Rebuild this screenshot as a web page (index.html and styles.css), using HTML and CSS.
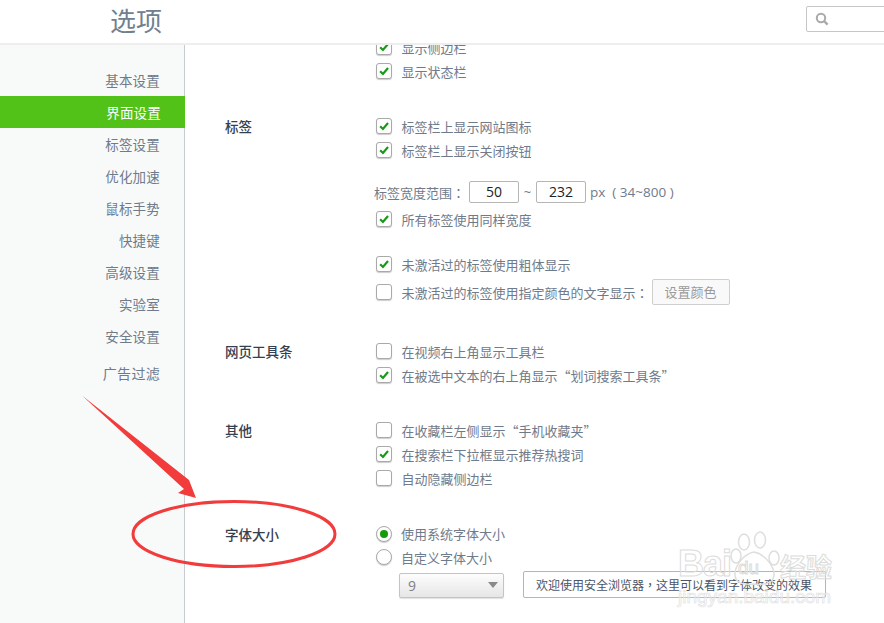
FILE: index.html
```html
<!DOCTYPE html>
<html lang="zh-CN">
<head>
<meta charset="utf-8">
<title>选项</title>
<link rel="stylesheet" href="styles.css">
</head>
<body>
<svg class="defs" width="0" height="0">
  <symbol id="tick" viewBox="0 0 16 16"><path d="M3.6 8.2 6.8 11.4 12.6 4.6" fill="none" stroke="#169a16" stroke-width="2.5"/></symbol>
</svg>
<div class="app">
  <header class="top">
    <h1 class="title">选项</h1>
    <div class="search">
      <svg class="search-icon" width="14" height="14" viewBox="0 0 14 14"><circle cx="6" cy="6" r="4.2" fill="none" stroke="#a9a9a9" stroke-width="2"/><path d="M9 9l3.6 3.6" stroke="#a9a9a9" stroke-width="2.4"/></svg>
    </div>
  </header>
  <div class="body">
    <nav class="side">
      <a class="nav-item">基本设置</a>
      <a class="nav-item active">界面设置</a>
      <a class="nav-item">标签设置</a>
      <a class="nav-item">优化加速</a>
      <a class="nav-item">鼠标手势</a>
      <a class="nav-item">快捷键</a>
      <a class="nav-item">高级设置</a>
      <a class="nav-item">实验室</a>
      <a class="nav-item">安全设置</a>
      <a class="nav-item ad">广告过滤</a>
    </nav>
    <main class="main">
      <section class="sec first">
        <div class="sec-label"></div>
        <div class="sec-body">
          <div class="row"><span class="cb"><svg viewBox="0 0 16 16"><use href="#tick"/></svg></span>显示侧边栏</div>
          <div class="row"><span class="cb"><svg viewBox="0 0 16 16"><use href="#tick"/></svg></span>显示状态栏</div>
        </div>
      </section>
      <section class="sec">
        <div class="sec-label">标签</div>
        <div class="sec-body">
          <div class="row"><span class="cb"><svg viewBox="0 0 16 16"><use href="#tick"/></svg></span>标签栏上显示网站图标</div>
          <div class="row"><span class="cb"><svg viewBox="0 0 16 16"><use href="#tick"/></svg></span>标签栏上显示关闭按钮</div>
          <div class="range">
            <span class="range-label">标签宽度范围<span class="pc" lang="zh-TW">：</span></span>
            <span class="num">50</span>
            <span class="tilde">~</span>
            <span class="num">232</span>
            <span class="unit">px&nbsp; ( 34~800 )</span>
          </div>
          <div class="row"><span class="cb"><svg viewBox="0 0 16 16"><use href="#tick"/></svg></span>所有标签使用同样宽度</div>
          <div class="row spaced"><span class="cb"><svg viewBox="0 0 16 16"><use href="#tick"/></svg></span>未激活过的标签使用粗体显示</div>
          <div class="row tall"><span class="cb"></span><span>未激活过的标签使用指定颜色的文字显示<span class="pc" lang="zh-TW">：</span></span><span class="btn">设置颜色</span></div>
        </div>
      </section>
      <section class="sec wide-gap">
        <div class="sec-label">网页工具条</div>
        <div class="sec-body">
          <div class="row"><span class="cb"></span>在视频右上角显示工具栏</div>
          <div class="row"><span class="cb"><svg viewBox="0 0 16 16"><use href="#tick"/></svg></span>在被选中文本的右上角显示“划词搜索工具条”</div>
        </div>
      </section>
      <section class="sec">
        <div class="sec-label">其他</div>
        <div class="sec-body">
          <div class="row"><span class="cb"></span>在收藏栏左侧显示“手机收藏夹”</div>
          <div class="row"><span class="cb"><svg viewBox="0 0 16 16"><use href="#tick"/></svg></span>在搜索栏下拉框显示推荐热搜词</div>
          <div class="row"><span class="cb"></span>自动隐藏侧边栏</div>
        </div>
      </section>
      <section class="sec wide-gap">
        <div class="sec-label">字体大小</div>
        <div class="sec-body">
          <div class="row short"><span class="radio on"></span>使用系统字体大小</div>
          <div class="row"><span class="radio"></span>自定义字体大小</div>
          <div class="font-row">
            <span class="select">9<i class="caret"></i></span>
            <span class="preview">欢迎使用安全浏览器<span class="pc" lang="zh-TW">，</span>这里可以看到字体改变的效果</span>
          </div>
        </div>
      </section>
    </main>
  </div>

  <svg class="mark" width="884" height="623" viewBox="0 0 884 623">
    <polygon points="82,395.500 189,480 196,498 178,493 184,489" fill="#f23b3b"/>
    <ellipse cx="234" cy="534" rx="101" ry="32.5" fill="none" stroke="#f23b3b" stroke-width="3"/>
  </svg>

  <div class="wm">
    <svg class="wm-paw" width="64" height="56" viewBox="0 0 64 56">
      <g fill="none" stroke="#dedede" stroke-width="1.5">
        <ellipse cx="14" cy="11" rx="5.5" ry="8"/>
        <ellipse cx="30" cy="9" rx="5.5" ry="8"/>
        <ellipse cx="6" cy="25" rx="5" ry="7"/>
        <ellipse cx="44" cy="27" rx="5" ry="7"/>
        <path d="M24 21C13 23 4 36 5 45c1 8 9 9 19 8 10 1 19 0 20-8 1-9-9-22-20-24z"/>
      </g>
    </svg>
    <span class="wm-bai">Bai</span><span class="wm-du">du</span><span class="wm-cn">经验</span>
    <span class="wm-url">jingyan.baidu.com</span>
  </div>
</div>
</body>
</html>
```
FILE: styles.css
```css
* { box-sizing: border-box; }
html, body { margin: 0; height: 100%; background: #fff; overflow: hidden; }
body {
  font-family: "Noto Sans CJK SC", "Liberation Sans", sans-serif;
  font-size: 13px;
  color: #6f7b8b;
}
.defs { display: block; height: 0; }
.pc { font-family: "Noto Sans CJK TC", sans-serif; }
.app { position: relative; width: 884px; height: 623px; overflow: hidden; display: flex; flex-direction: column; }

.top {
  height: 45px;
  flex: none;
  display: flex;
  align-items: flex-start;
  justify-content: space-between;
  border-bottom: 2px solid #eeeeee;
  padding-left: 110px;
}
.title { margin: 1px 0 0; font-size: 26px; line-height: 38px; font-weight: 400; color: #708090; }
.search {
  width: 91px;
  height: 26px;
  margin: 6px -13px 0 0;
  border: 1px solid #c6c6c6;
  border-radius: 2px;
  padding: 5px 0 0 8px;
}
.search-icon { display: block; }

.body { flex: 1; display: flex; min-height: 0; }
.side {
  width: 185px;
  flex: none;
  background: #f8fafa;
  border-right: 1px solid #c8ccd0;
  padding-top: 19px;
}
.nav-item {
  display: block;
  height: 32px;
  line-height: 32px;
  padding-right: 24px;
  text-align: right;
  font-size: 13.5px;
  letter-spacing: .2px;
  color: #6f7b8b;
}
.nav-item.active { background: #52c219; color: #fff; margin-right: -1px; position: relative; }
.nav-item.ad { margin-top: 5px; font-size: 14px; letter-spacing: .3px; }

.main { flex: 1; min-width: 0; overflow: hidden; padding-left: 40px; }
.sec { display: flex; margin-top: 31px; }
.sec.first { margin-top: -10px; }
.sec.wide-gap { margin-top: 32px; }
.sec-label {
  width: 151px;
  flex: none;
  font-size: 13.5px;
  line-height: 24px;
  font-weight: 500;
  color: #334050;
}
.sec-body { flex: 1; min-width: 0; }

.row { height: 24px; display: flex; align-items: center; white-space: nowrap; }
.row.spaced { margin-top: 21px; }
.row.tall { height: 30px; margin-top: 1px; }
.row.short { height: 23px; }
.cb {
  width: 16px;
  height: 16px;
  flex: none;
  margin-right: 9.5px;
  background: #fff;
  border: 1px solid #a9a9a9;
  border-radius: 3px;
  box-shadow: 0 1px 1px rgba(0,0,0,.2);
}
.cb svg { display: block; width: 14px; height: 14px; }
.radio {
  width: 16px;
  height: 16px;
  flex: none;
  margin-right: 9px;
  background: #fff;
  border: 1px solid #a9a9a9;
  border-radius: 50%;
  box-shadow: 0 1px 1px rgba(0,0,0,.2);
  display: flex;
  align-items: center;
  justify-content: center;
}
.radio.on::after { content: ""; width: 8px; height: 8px; border-radius: 50%; background: #169a0c; }

.range { height: 30px; display: flex; align-items: center; margin: 15px 0 0 -2px; white-space: nowrap; }
.range-label { width: 95px; flex: none; }
.num {
  width: 50px;
  height: 22px;
  flex: none;
  border: 1px solid #b5b5b5;
  border-radius: 2px;
  background: #fff;
  text-align: center;
  font-family: "Open Sans", sans-serif;
  font-size: 14px;
  line-height: 20px;
  color: #222;
}
.tilde { width: 17px; text-align: center; font-family: "Open Sans", sans-serif; font-size: 13px; }
.unit { margin-left: 4px; font-family: "Open Sans", sans-serif; font-size: 13.5px; }

.btn {
  width: 78px;
  height: 26px;
  flex: none;
  margin-left: 3px;
  border: 1px solid #cfcfcf;
  border-radius: 2px;
  background: #f9f9f9;
  text-align: center;
  line-height: 24px;
  color: #9a9a9a;
}

.font-row { display: flex; align-items: center; height: 28px; margin-top: 2px; }
.select {
  width: 105px;
  height: 25px;
  flex: none;
  margin-left: 23px;
  display: flex;
  align-items: center;
  justify-content: space-between;
  padding: 0 5px 0 8px;
  border: 1px solid #c4c4c4;
  border-radius: 2px;
  background: linear-gradient(#fdfdfd, #e6e6e6);
  box-shadow: 0 1px 1px rgba(0,0,0,.12);
  font-family: "Open Sans", sans-serif;
  font-size: 14px;
  color: #808080;
}
.caret { width: 0; height: 0; border-left: 5px solid transparent; border-right: 5px solid transparent; border-top: 6px solid #8a8a8a; }
.preview {
  width: 303px;
  height: 27px;
  flex: none;
  margin: 0 0 2px 19px;
  padding-left: 12px;
  border: 1px solid #b5b5b5;
  border-radius: 2px;
  font-size: 12px;
  line-height: 25px;
  color: #4a5568;
  white-space: nowrap;
}

.mark { position: absolute; left: 0; top: 0; pointer-events: none; }

.wm { position: absolute; left: 678px; top: 530px; width: 170px; height: 75px; pointer-events: none; }
.wm-paw { position: absolute; left: 52px; top: 1px; }
.wm-bai, .wm-du, .wm-cn, .wm-url {
  position: absolute;
  color: rgba(255,255,255,.2);
  -webkit-text-stroke: 1px #dcdcdc;
  white-space: nowrap;
}
.wm-bai { left: 0; top: 14px; font: 700 36px/40px "Liberation Sans", sans-serif; letter-spacing: -1px; }
.wm-du { left: 60px; top: 27px; font: 400 19px/22px "Liberation Sans", sans-serif; }
.wm-cn { left: 102px; top: 20px; font: 700 26px/32px "Noto Sans CJK SC", sans-serif; }
.wm-url { left: 0; top: 56px; font: 400 19px/22px "Liberation Sans", sans-serif; -webkit-text-stroke: .7px #e2e2e2; }
```
